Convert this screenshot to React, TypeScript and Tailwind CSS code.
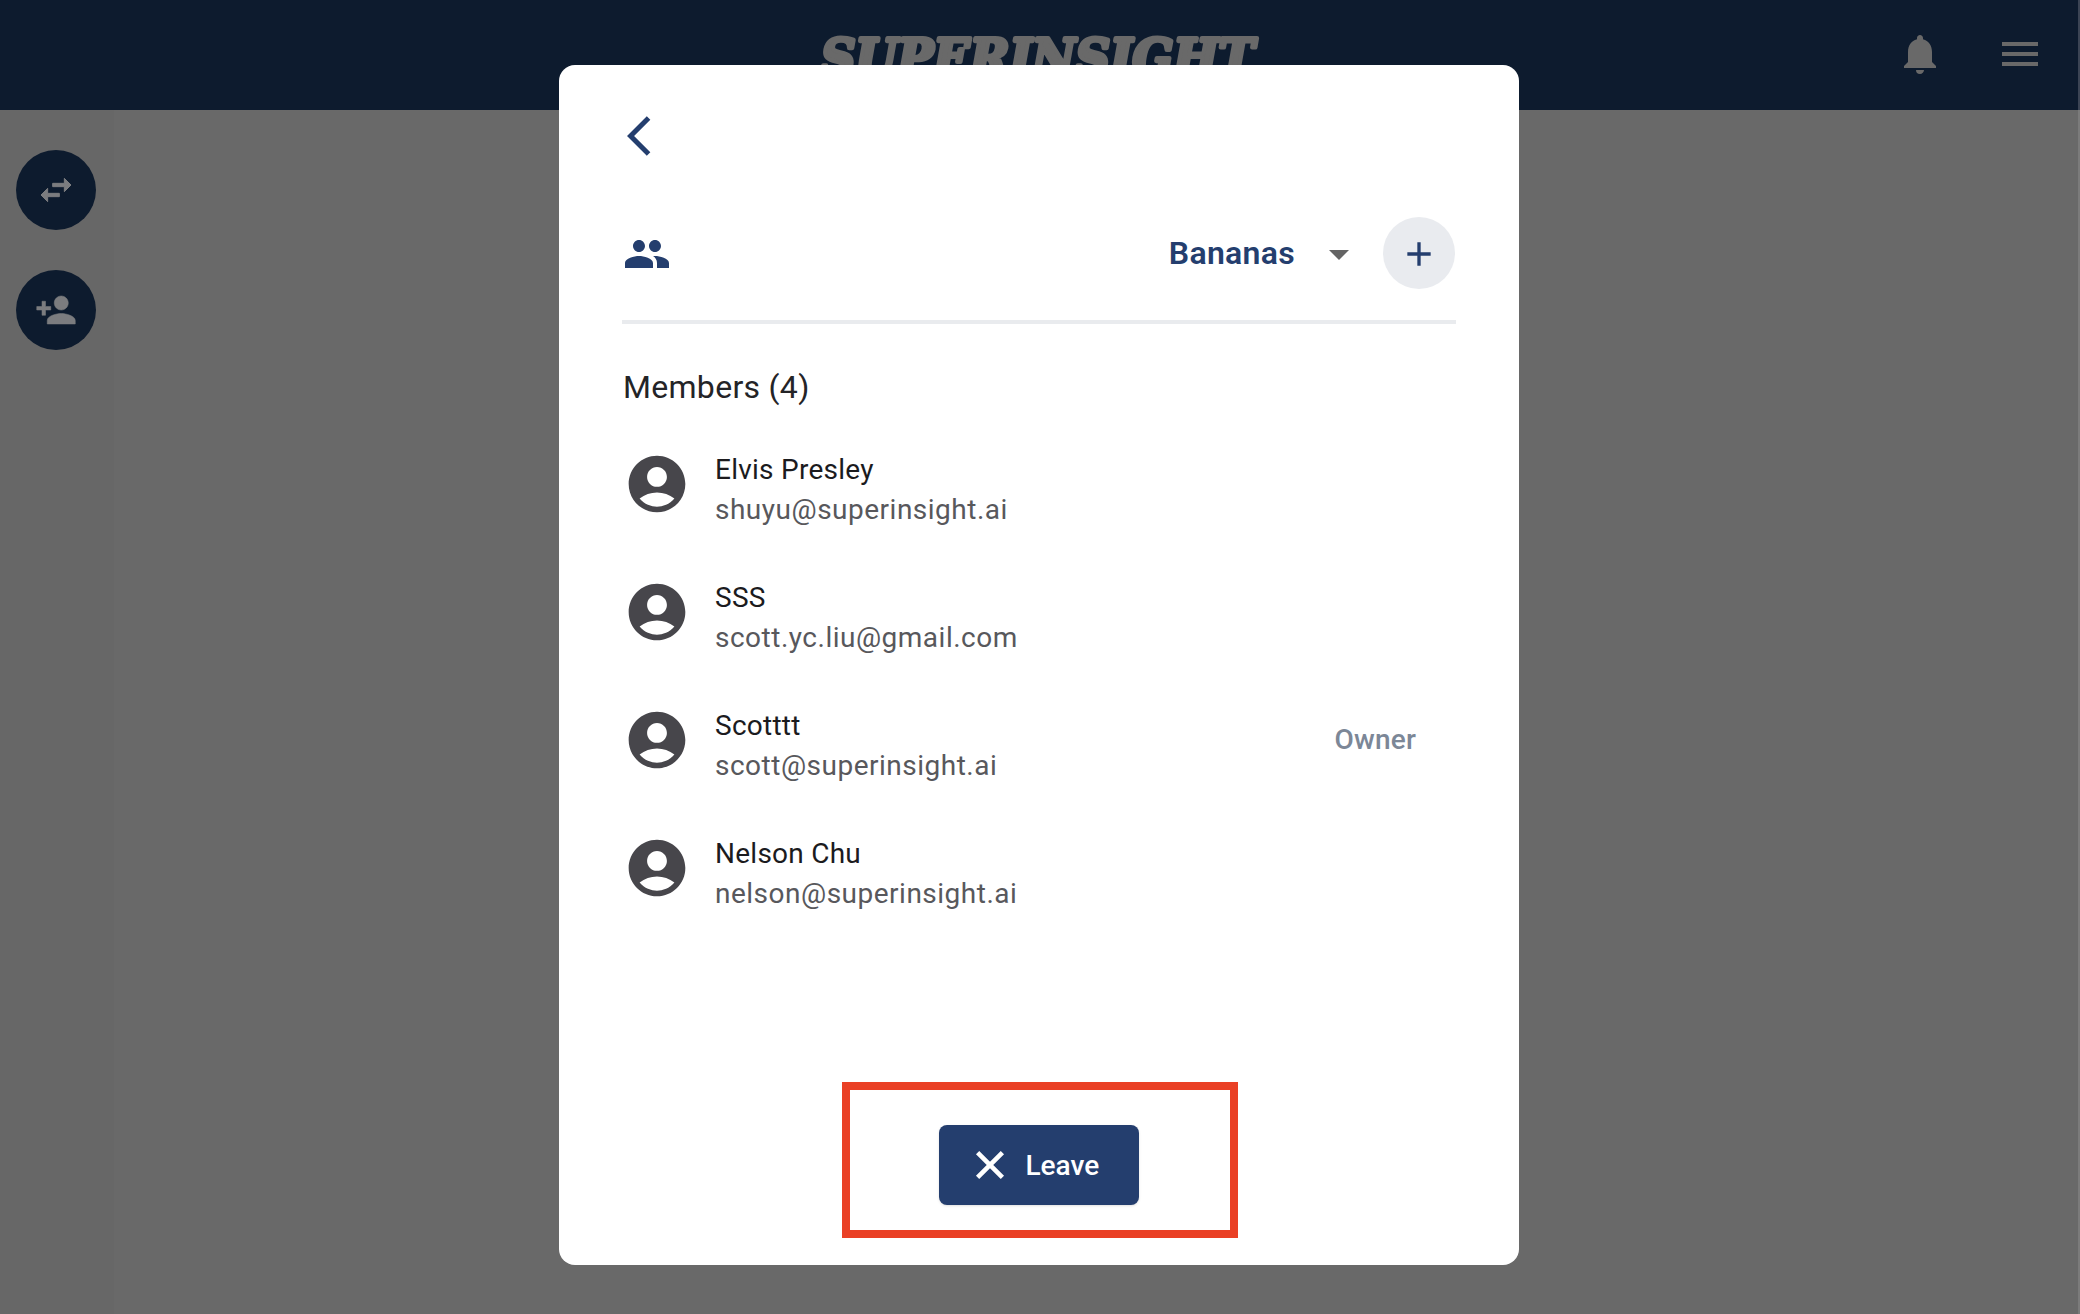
import {
  MdAccountCircle,
  MdAdd,
  MdArrowBackIos,
  MdArrowDropDown,
  MdMenu,
  MdNotifications,
  MdPeople,
} from "react-icons/md";

type Member = { name: string; email: string; role?: string };

const members: Member[] = [
  { name: "Elvis Presley", email: "shuyu@superinsight.ai" },
  { name: "SSS", email: "scott.yc.liu@gmail.com" },
  { name: "Scotttt", email: "scott@superinsight.ai", role: "Owner" },
  { name: "Nelson Chu", email: "nelson@superinsight.ai" },
];

function SwapIcon() {
  return (
    <svg viewBox="0 0 24 24" className="size-10 fill-current stroke-current stroke-[0.6]">
      <path d="M6.99 11 3 15l3.99 4v-3H14v-2H6.99v-3zM21 9l-3.99-4v3H10v2h7.01v3L21 9z" />
    </svg>
  );
}

function PersonAddIcon() {
  return (
    <svg viewBox="0 0 24 24" className="size-[42px] fill-current stroke-current stroke-[0.3]">
      <path d="M15 12c2.21 0 4-1.79 4-4s-1.79-4-4-4-4 1.79-4 4 1.79 4 4 4zm-9-2V7H4v3H1v2h3v3h2v-3h3v-2H6zm9 4c-2.67 0-8 1.34-8 4v2h16v-2c0-2.66-5.33-4-8-4z" />
    </svg>
  );
}

function CloseIcon() {
  return (
    <svg viewBox="0 0 24 24" className="size-12 fill-none stroke-current stroke-[2.3]">
      <path d="M5.8 5.8l12.4 12.4M18.2 5.8L5.8 18.2" />
    </svg>
  );
}

function Header() {
  return (
    <header className="flex h-[110px] shrink-0 items-center border-r-2 border-[#3b4454] bg-[#0d1b2e] text-[#696969]">
      <div className="flex-1 pl-[30px]" />
      <svg width="460" height="60" viewBox="0 0 460 60" className="mt-1.5 shrink-0" aria-label="SUPERINSIGHT">
        <text
          x="14"
          y="48"
          textLength="433"
          lengthAdjust="spacingAndGlyphs"
          fontSize="52"
          fontWeight="700"
          fontStyle="italic"
          fontFamily="'DejaVu Serif Condensed', 'DejaVu Serif', serif"
          fill="#696969"
          stroke="#696969"
          strokeWidth="4.2"
          strokeLinejoin="round"
        >
          SUPERINSIGHT
        </text>
      </svg>
      <div className="flex flex-1 justify-end gap-[52px] pr-[34px] pb-0.5">
        <MdNotifications className="size-12" />
        <MdMenu className="size-12" />
      </div>
    </header>
  );
}

function Sidebar() {
  return (
    <aside className="flex w-[114px] flex-col gap-10 bg-[#676767] px-4 pt-10 text-[#7b7c7f]">
      <button className="flex size-20 items-center justify-center rounded-full bg-[#0d1b2e]">
        <SwapIcon />
      </button>
      <button className="flex size-20 items-center justify-center rounded-full bg-[#0d1b2e]">
        <PersonAddIcon />
      </button>
    </aside>
  );
}

function MemberRow({ name, email, role }: Member) {
  return (
    <li className="flex h-32 items-center">
      <MdAccountCircle className="ml-px size-[68px] shrink-0 text-[#47464b]" />
      <div className="ml-6 flex-1 pt-3 text-[28px] leading-10">
        <p className="tracking-[0.25px] text-[#1b1b1e]">{name}</p>
        <p className="tracking-[0.5px] text-[#58585c]">{email}</p>
      </div>
      {role && <span className="mr-10 text-[28px] font-medium tracking-[0.2px] text-[#7c8797]">{role}</span>}
    </li>
  );
}

function TeamDialog() {
  return (
    <div className="flex h-[1200px] w-[960px] flex-col rounded-2xl bg-white px-[63px] pt-[47px]">
      <button className="ml-[5px] size-12 text-[#243e6e]">
        <MdArrowBackIos className="size-12" />
      </button>
      <div className="mt-14 flex h-[73px] items-center text-[#243e6e]">
        <MdPeople className="mt-0.5 ml-px size-12" />
        <span className="ml-auto text-[32px] font-semibold tracking-[0.3px]">Bananas</span>
        <MdArrowDropDown className="mt-0.5 mr-5 ml-5 size-12 text-[#646464]" />
        <button className="mr-px flex size-[72px] items-center justify-center rounded-full bg-[#e9ebef]">
          <MdAdd className="mt-0.5 mr-px size-10" />
        </button>
      </div>
      <hr className="mt-[31px] border-t-4 border-[#e9ebee]" />
      <h2 className="mt-[43px] ml-px text-[32px] leading-10 tracking-[0.3px] text-[#242427]">Members (4)</h2>
      <ul className="mt-[13px]">
        {members.map((member) => (
          <MemberRow key={member.email} {...member} />
        ))}
      </ul>
      <div className="mt-[150px] ml-[220px] flex h-[156px] w-[396px] justify-center border-8 border-[#ea4025]">
        <button className="mt-[35px] mr-[3px] flex h-20 w-[200px] items-center rounded-lg bg-[#243e6e] pl-[27px] text-white shadow-sm">
          <CloseIcon />
          <span className="ml-3 pt-0.5 text-[28px] font-medium">Leave</span>
        </button>
      </div>
    </div>
  );
}

export default function App() {
  return (
    <div className="relative flex h-[1314px] w-[2080px] flex-col overflow-hidden bg-[#696969] font-['Roboto',sans-serif]">
      <Header />
      <div className="flex flex-1 border-r-2 border-[#7b7b7b]">
        <Sidebar />
        <main className="flex-1" />
      </div>
      <div className="absolute inset-0 flex items-start pt-[65px] pl-[559px]">
        <TeamDialog />
      </div>
    </div>
  );
}
